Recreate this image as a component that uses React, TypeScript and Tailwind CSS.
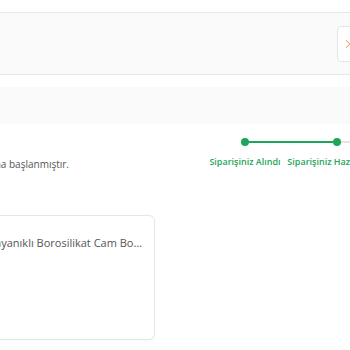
import { ChevronRight } from "lucide-react";

const steps = [
  { label: "Siparişiniz Alındı", done: true },
  { label: "Siparişiniz Hazırlanıyor", done: true },
  { label: "Kargoya Verildi", done: false },
];

export default function App() {
  return (
    <div
      className="w-[350px] h-[350px] overflow-hidden bg-white text-[#555]"
      style={{ fontFamily: '"Open Sans", "Noto Sans", sans-serif' }}
    >
      {/* Header bar */}
      <div className="mt-[12px] h-[63px] border-y border-[#e8e8e8] bg-[#fafafa] flex items-center justify-end">
        <button className="w-[36px] h-[36px] mr-[-23px] rounded border border-[#e6e6e6] bg-white flex items-center pl-[3px]">
          <ChevronRight className="w-[14px] h-[14px] text-[#f27a1a]" strokeWidth={1.5} />
        </button>
      </div>

      {/* Summary strip */}
      <div className="mt-[12px] h-[37px] bg-[#fafafa]" />

      {/* Status + stepper */}
      <div className="mt-[13px] flex items-start">
        <div className="w-[69px] flex justify-end whitespace-nowrap text-[10px] mt-[20px] leading-[14px]">
          Siparişinizin hazırlanmasına başlanmıştır.
        </div>
        <div className="ml-[130px] flex">
          {steps.map((s, i) => (
            <div key={i} className="w-[92px] flex flex-col items-center shrink-0">
              <div className="w-full flex items-center h-[10px]">
                <div className={`flex-1 h-[2px] ${i === 0 ? "bg-transparent" : s.done ? "bg-[#1fa55a]" : "bg-[#e5e5e5]"}`} />
                <div className={`w-[8px] h-[8px] rounded-full ${s.done ? "bg-[#1fa55a]" : "bg-[#e5e5e5]"}`} />
                <div
                  className={`flex-1 h-[2px] ${
                    i < steps.length - 1 && steps[i + 1].done ? "bg-[#1fa55a]" : "bg-[#e5e5e5]"
                  }`}
                />
              </div>
              <div className="mt-[9px] whitespace-nowrap text-[9px] font-semibold text-[#1fa55a] leading-[12px]">
                {s.label}
              </div>
            </div>
          ))}
        </div>
      </div>

      {/* Product card */}
      <div className="mt-[44px] ml-[-20px] w-[175px] h-[125px] rounded-[6px] border border-[#e6e6e6] bg-white shadow-[0_1px_2px_rgba(0,0,0,0.04)]">
        <div className="mt-[20px] w-[161px] flex justify-end whitespace-nowrap text-[11px] leading-[14px]">
          Isıya Dayanıklı Borosilikat Cam Bo…
        </div>
      </div>
    </div>
  );
}
